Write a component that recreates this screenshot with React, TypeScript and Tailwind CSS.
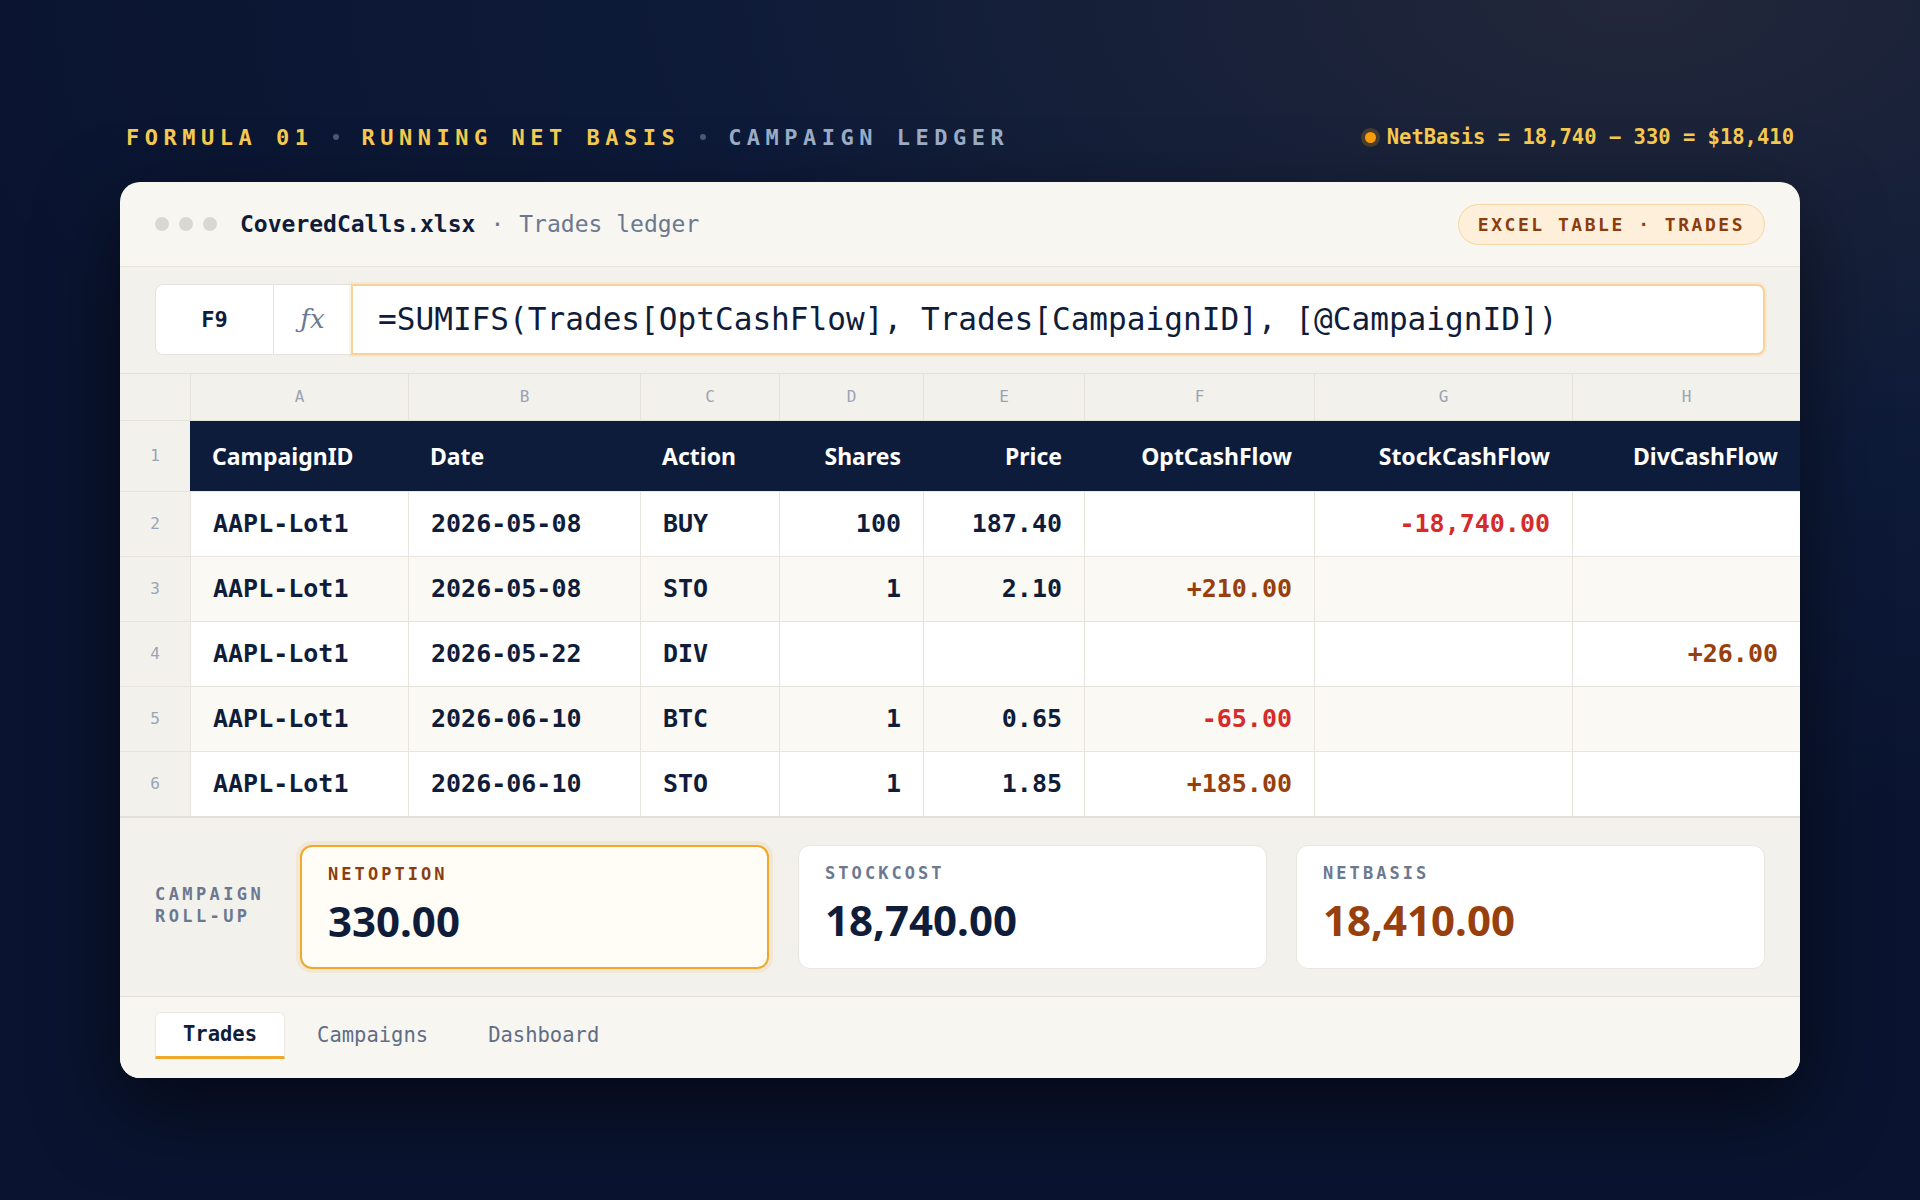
import React from 'react';

type Row = {
  n: number;
  id: string;
  date: string;
  action: string;
  shares: string;
  price: string;
  opt: string;
  stock: string;
  div: string;
};

const rows: Row[] = [
  { n: 2, id: 'AAPL-Lot1', date: '2026-05-08', action: 'BUY', shares: '100', price: '187.40', opt: '', stock: '-18,740.00', div: '' },
  { n: 3, id: 'AAPL-Lot1', date: '2026-05-08', action: 'STO', shares: '1', price: '2.10', opt: '+210.00', stock: '', div: '' },
  { n: 4, id: 'AAPL-Lot1', date: '2026-05-22', action: 'DIV', shares: '', price: '', opt: '', stock: '', div: '+26.00' },
  { n: 5, id: 'AAPL-Lot1', date: '2026-06-10', action: 'BTC', shares: '1', price: '0.65', opt: '-65.00', stock: '', div: '' },
  { n: 6, id: 'AAPL-Lot1', date: '2026-06-10', action: 'STO', shares: '1', price: '1.85', opt: '+185.00', stock: '', div: '' },
];

const columns = ['A', 'B', 'C', 'D', 'E', 'F', 'G', 'H'];
const headers = [
  { label: 'CampaignID', right: false },
  { label: 'Date', right: false },
  { label: 'Action', right: false },
  { label: 'Shares', right: true },
  { label: 'Price', right: true },
  { label: 'OptCashFlow', right: true },
  { label: 'StockCashFlow', right: true },
  { label: 'DivCashFlow', right: true },
];

const gridCols = 'grid grid-cols-[70px_218px_232px_139px_144px_161px_230px_258px_1fr]';
const mono = "font-['DejaVu_Sans_Mono','Liberation_Mono',monospace]";
const sans = "font-['Noto_Sans','DejaVu_Sans',sans-serif]";

const moneyClass = (v: string) => {
  if (v.startsWith('-')) return 'text-[#d42b2b]';
  if (v.startsWith('+')) return 'text-[#97400d]';
  return 'text-[#0f1d3a]';
};

const DataCell: React.FC<{ value: string; right?: boolean; money?: boolean }> = ({ value, right, money }) => (
  <div
    className={`flex items-center px-[22px] border-l border-[#e7e4dd] text-[25px] font-semibold ${right ? 'justify-end' : 'justify-start'} ${
      money ? moneyClass(value) : 'text-[#0f1d3a]'
    }`}
  >
    {value}
  </div>
);

const StatCard: React.FC<{ label: string; value: string; highlight?: boolean; valueColor: string; labelColor: string }> = ({
  label,
  value,
  highlight,
  valueColor,
  labelColor,
}) => (
  <div
    className={`flex flex-col rounded-[12px] px-[26px] pt-[15px] h-[124px] ${
      highlight
        ? 'bg-[#fffdf6] border-2 border-[#efa82c] shadow-[0_0_0_4px_rgba(240,168,44,0.12)]'
        : 'bg-white border border-[#e9e6df]'
    }`}
  >
    <div className={`${mono} font-bold text-[17px] leading-[24px] tracking-[0.18em] ${labelColor}`}>{label}</div>
    <div className={`${sans} font-bold text-[42px] leading-none mt-[14px] ${valueColor}`}>{value}</div>
  </div>
);

const Sep: React.FC = () => <span className="ml-[20px] mr-[22px] inline-block w-[6px] h-[6px] rounded-full bg-[#4a5878]" />;

const App: React.FC = () => {
  return (
    <div className="min-h-screen w-full bg-[#0b1833] bg-[radial-gradient(ellipse_90%_70%_at_85%_0%,#22273a_0%,#0d1a38_55%,#0a1430_100%)] px-[120px] pt-[122px] pb-[120px]">
      {/* title row */}
      <div className={`${mono} flex items-center justify-between h-[30px] px-[6px] mb-[30px]`}>
        <div className="flex items-center text-[22px] font-bold tracking-[0.25em]">
          <span className="text-[#f5c94f]">FORMULA 01</span>
          <Sep />
          <span className="text-[#f5c94f]">RUNNING NET BASIS</span>
          <Sep />
          <span className="text-[#9aabc6]">CAMPAIGN LEDGER</span>
        </div>
        <div className="flex items-center gap-[11px] text-[20.5px] font-bold text-[#f5c94f]">
          <span className="inline-block w-[11px] h-[11px] rounded-full bg-[#f59e0b] shadow-[0_0_0_4px_rgba(245,158,11,0.22)]" />
          <span>NetBasis = 18,740 − 330 = $18,410</span>
        </div>
      </div>

      {/* window */}
      <div className={`${mono} w-full rounded-[20px] bg-[#f8f6f1] overflow-hidden shadow-[0_30px_80px_rgba(0,0,0,0.55)]`}>
        {/* title bar */}
        <div className="flex items-center justify-between h-[85px] px-[35px] border-b border-[#e6e3dc]">
          <div className="flex items-center">
            <div className="flex items-center gap-[10px] mr-[23px]">
              <span className="w-[14px] h-[14px] rounded-full bg-[#d9d7d1]" />
              <span className="w-[14px] h-[14px] rounded-full bg-[#d9d7d1]" />
              <span className="w-[14px] h-[14px] rounded-full bg-[#d9d7d1]" />
            </div>
            <span className="text-[23px] font-bold text-[#0f1d3a]">CoveredCalls.xlsx</span>
            <span className="text-[23px] text-[#6b7890] mx-[15px]">·</span>
            <span className="text-[23px] text-[#6b7890]">Trades ledger</span>
          </div>
          <div className="flex items-center h-[41px] px-[19px] rounded-full bg-[#fdefd9] border border-[#f5d6a4] text-[18px] font-bold tracking-[0.14em] text-[#8b3d0e]">
            EXCEL TABLE · TRADES
          </div>
        </div>

        {/* formula bar */}
        <div className="bg-[#f3f1ec] px-[35px] pt-[17px] pb-[18px] border-b border-[#e3e0d9]">
          <div className="flex h-[71px]">
            <div className="w-[119px] flex items-center justify-center bg-white border border-[#e6e3dc] rounded-l-[8px] text-[22px] font-bold text-[#0f1d3a]">
              F9
            </div>
            <div className="w-[77px] flex items-center justify-center bg-white border-y border-[#e6e3dc] font-['DejaVu_Serif',serif] italic text-[26px] text-[#6b7890]">
              ƒx
            </div>
            <div className="flex-1 flex items-center bg-white border-2 border-[#f7d39a] rounded-r-[8px] px-[25px] text-[31.1px] text-[#0f1d3a] shadow-[0_0_0_2px_rgba(247,211,154,0.25)]">
              =SUMIFS(Trades[OptCashFlow], Trades[CampaignID], [@CampaignID])
            </div>
          </div>
        </div>

        {/* column letters */}
        <div className={`${gridCols} h-[47px] bg-[#f3f1ec] border-b border-[#e3e0d9]`}>
          <div />
          {columns.map((c) => (
            <div key={c} className="flex items-center justify-center border-l border-[#e5e2db] text-[16px] text-[#9aa4b6]">
              {c}
            </div>
          ))}
        </div>

        {/* header row */}
        <div className={`${gridCols} h-[70px]`}>
          <div className="flex items-center justify-center bg-[#f3f1ec] text-[16px] text-[#9aa4b6]">1</div>
          {headers.map((h) => (
            <div
              key={h.label}
              className={`${sans} flex items-center px-[22px] bg-[#0e1c3c] text-white font-bold text-[23px] ${
                h.right ? 'justify-end' : 'justify-start'
              }`}
            >
              {h.label}
            </div>
          ))}
        </div>

        {/* data rows */}
        {rows.map((r) => (
          <div
            key={r.n}
            className={`${gridCols} h-[65px] border-t border-[#e7e4dd] ${r.n % 2 === 1 ? 'bg-[#fbf9f3]' : 'bg-white'}`}
          >
            <div className="flex items-center justify-center bg-[#f3f1ec] text-[16px] text-[#9aa4b6]">{r.n}</div>
            <DataCell value={r.id} />
            <DataCell value={r.date} />
            <DataCell value={r.action} />
            <DataCell value={r.shares} right />
            <DataCell value={r.price} right />
            <DataCell value={r.opt} right money />
            <DataCell value={r.stock} right money />
            <DataCell value={r.div} right money />
          </div>
        ))}

        {/* roll-up */}
        <div className="flex items-center bg-[#f3f1ec] border-t-2 border-[#e3e0d9] px-[35px] h-[180px]">
          <div className="w-[145px] shrink-0 mb-[5px] text-[17px] leading-[22px] font-bold tracking-[0.2em] text-[#6b7890]">
            CAMPAIGN
            <br />
            ROLL-UP
          </div>
          <div className="flex-1 grid grid-cols-3 gap-[29px]">
            <StatCard label="NETOPTION" value="330.00" highlight labelColor="text-[#8b3d0e]" valueColor="text-[#0f1d3a]" />
            <StatCard label="STOCKCOST" value="18,740.00" labelColor="text-[#6b7890]" valueColor="text-[#0f1d3a]" />
            <StatCard label="NETBASIS" value="18,410.00" labelColor="text-[#6b7890]" valueColor="text-[#97400d]" />
          </div>
        </div>

        {/* sheet tabs */}
        <div className="flex items-start gap-[4px] bg-[#f8f6f1] border-t border-[#e3e0d9] px-[35px] pt-[15px] h-[82px]">
          <div className="h-[47px] flex items-center px-[27px] bg-white rounded-t-[6px] border border-[#ece9e2] border-b-[3px] border-b-[#efa82c] text-[20.5px] font-bold text-[#0f1d3a]">
            Trades
          </div>
          <div className="h-[47px] flex items-center px-[28px] text-[20.5px] text-[#5f6e86]">Campaigns</div>
          <div className="h-[47px] flex items-center px-[28px] text-[20.5px] text-[#5f6e86]">Dashboard</div>
        </div>
      </div>
    </div>
  );
};

export default App;
